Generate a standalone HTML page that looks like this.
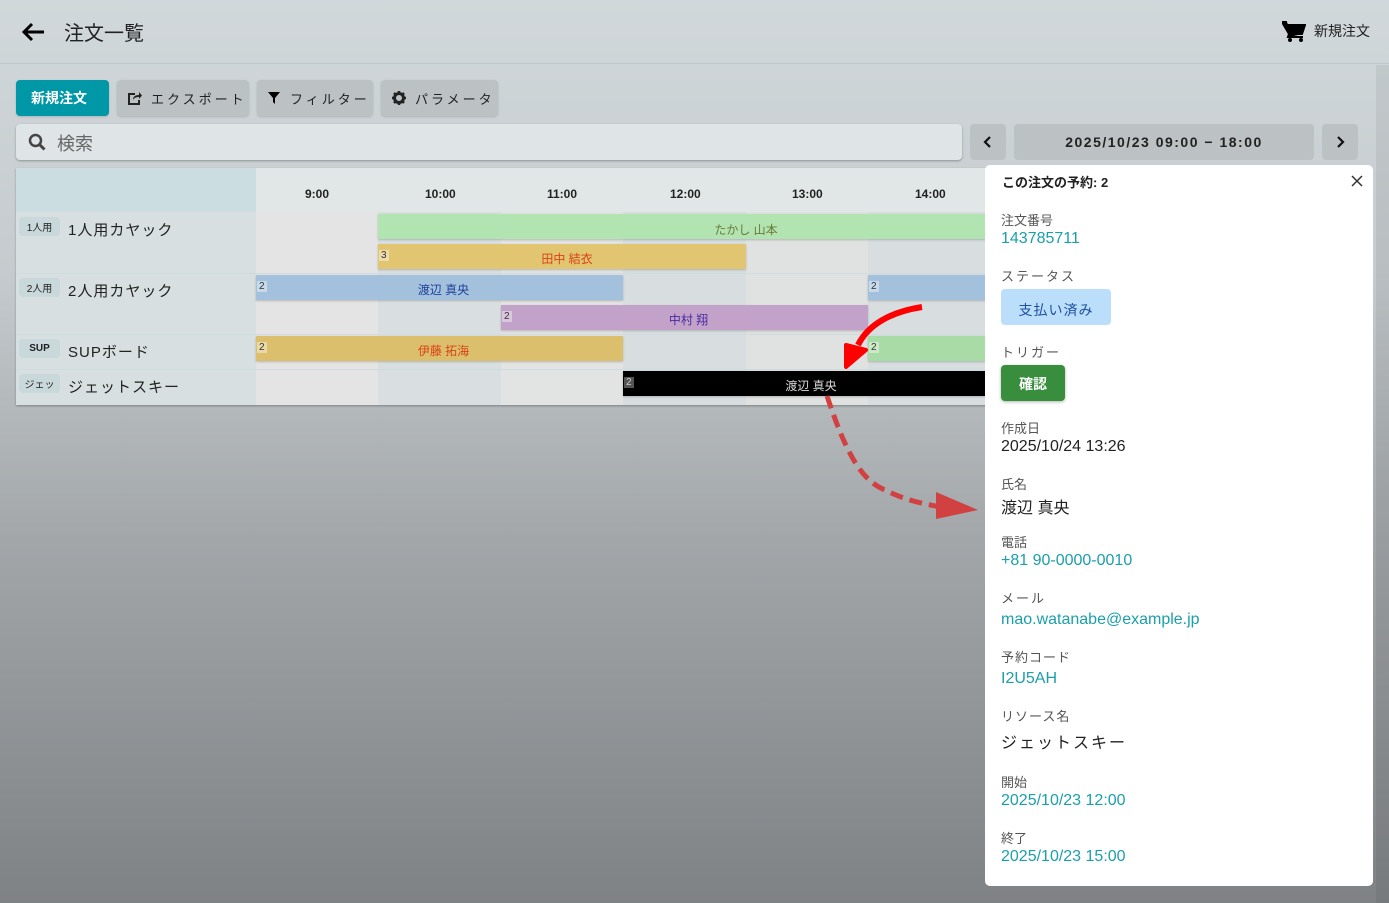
<!DOCTYPE html>
<html><head><meta charset="utf-8"><style>
*{box-sizing:border-box;margin:0;padding:0}
body{width:1389px;height:903px;overflow:hidden;position:relative;font-family:"Liberation Sans","Noto Sans CJK JP",sans-serif;background:linear-gradient(#d1d8db 0%,#c5cbce 30%,#a2a6a9 60%,#7f8285 100%);color:#222}
.a{position:absolute}
.btn{position:absolute;top:80px;height:36px;border-radius:4px;background:#bcc1c3;font-size:13px;letter-spacing:3px;display:flex;align-items:center;padding-left:11px;color:#222;box-shadow:0 1px 2px rgba(0,0,0,.15)}
.bar{position:absolute;height:25px;font-size:12px;display:flex;align-items:center;justify-content:center;box-shadow:0 1px 2px rgba(0,0,0,.2)}
.num{position:absolute;left:1px;top:6px;font-size:10px;background:rgba(255,255,255,.4);padding:0 2px;color:#333}
.lbl{position:absolute;left:1001px;font-size:13px;color:#555}
.val{position:absolute;left:1001px;font-size:16px;color:#1a9fab}
.tag{position:absolute;left:19px;width:41px;height:19px;background:#c9d8db;border-radius:4px;font-size:10px;display:flex;align-items:center;justify-content:center;color:#222}
.rn{position:absolute;left:68px;font-size:15px;letter-spacing:1px}
</style></head><body>
<div class="a" style="left:0;top:63px;width:1389px;height:1px;background:#c0c6c9"></div>
<svg class="a" style="left:20px;top:20px" width="26" height="24" viewBox="0 0 26 24"><path d="M24 12H5M12 4l-8 8 8 8" stroke="#000" stroke-width="3" fill="none"/></svg>
<div class="a" style="left:64px;top:17px;font-size:20px">注文一覧</div>
<svg class="a" style="left:1282px;top:21px" width="24" height="22" viewBox="0 0 24 22"><path d="M0 1h4l1 3h18l-3 9H7zM7 13l-1 3h15" stroke="#000" stroke-width="2" fill="#000"/><circle cx="8" cy="19" r="2"/><circle cx="19" cy="19" r="2"/></svg>
<div class="a" style="left:1314px;top:21px;font-size:14px">新規注文</div>
<div class="a" style="left:1376px;top:65px;width:13px;height:838px;background:rgba(0,0,0,.06)"></div>
<div class="btn" style="left:16px;width:93px;background:#0097a7;color:#fff;font-size:14px;letter-spacing:0;padding-left:15px;font-weight:bold">新規注文</div>
<div class="btn" style="left:117px;width:132px"><svg width="14" height="13" style="margin-right:9px" viewBox="0 0 14 13"><path d="M7 2H1v10h10V8" stroke="#222" stroke-width="2" fill="none"/><path d="M5 8c0-4 3-5 6-5V0l3 3.5L11 7V5C8 5 6 6 5 8z" fill="#222"/></svg>エクスポート</div>
<div class="btn" style="left:257px;width:116px"><svg width="12" height="12" style="margin-right:10px"><path d="M0 0h12L7 6v6L5 10V6z"/></svg>フィルター</div>
<div class="btn" style="left:381px;width:117px"><svg width="14" height="14" style="margin-right:9px" viewBox="0 0 14 14"><circle cx="7" cy="7" r="4.5" fill="none" stroke="#222" stroke-width="3"/><path d="M7 0v3M7 11v3M0 7h3M11 7h3M2 2l2 2M10 10l2 2M2 12l2-2M10 4l2-2" stroke="#222" stroke-width="2.5"/></svg>パラメータ</div>
<div class="a" style="left:16px;top:124px;width:946px;height:36px;background:#dfe4e6;border-radius:4px;box-shadow:0 1px 2px rgba(0,0,0,.3)"></div>
<svg class="a" style="left:28px;top:133px" width="18" height="18"><circle cx="7.5" cy="7.5" r="5.5" stroke="#444" stroke-width="2.5" fill="none"/><path d="M11.5 11.5l5 5" stroke="#444" stroke-width="3"/></svg>
<div class="a" style="left:57px;top:130px;font-size:18px;color:#666">検索</div>
<div class="a" style="left:970px;top:124px;width:36px;height:36px;background:#bcc1c3;border-radius:4px"><svg class="a" style="left:13px;top:12px" width="10" height="12"><path d="M7 1L2 6l5 5" stroke="#111" stroke-width="2.2" fill="none"/></svg></div>
<div class="a" style="left:1014px;top:124px;width:300px;height:36px;background:#bcc1c3;border-radius:4px;text-align:center;line-height:36px;font-size:14px;letter-spacing:1.5px;font-weight:bold;color:#222">2025/10/23 09:00 − 18:00</div>
<div class="a" style="left:1322px;top:124px;width:36px;height:36px;background:#bcc1c3;border-radius:4px"><svg class="a" style="left:13px;top:12px" width="10" height="12"><path d="M3 1l5 5-5 5" stroke="#111" stroke-width="2.2" fill="none"/></svg></div>
<!-- timeline -->
<div class="a" style="left:16px;top:168px;width:970px;height:237px;background:#dde2e3;box-shadow:0 1px 2px rgba(0,0,0,.3)"></div>
<div class="a" style="left:16px;top:168px;width:240px;height:44px;background:#cbdde0"></div>
<div class="a" style="left:16px;top:212px;width:240px;height:193px;background:#d8dfe0"></div>
<div class="a" style="left:256px;top:168px;width:730px;height:44px;background:#e1e6e6"></div>
<div class="a" style="left:256px;top:212px;width:122px;height:193px;background:#e4e4e4"></div>
<div class="a" style="left:378px;top:212px;width:123px;height:193px;background:#d9dfe1"></div>
<div class="a" style="left:501px;top:212px;width:122px;height:193px;background:#e2e3e3"></div>
<div class="a" style="left:623px;top:212px;width:123px;height:193px;background:#d8dee0"></div>
<div class="a" style="left:746px;top:212px;width:122px;height:193px;background:#e0e1e1"></div>
<div class="a" style="left:868px;top:212px;width:118px;height:193px;background:#d8dee0"></div>
<div class="a" style="left:16px;top:273px;width:970px;height:1px;background:#cfdcdd"></div>
<div class="a" style="left:16px;top:334px;width:970px;height:1px;background:#cfdcdd"></div>
<div class="a" style="left:16px;top:369px;width:970px;height:1px;background:#cfdcdd"></div>
<div class="a" style="left:256px;top:187px;width:730px;font-size:12px;font-weight:bold">
<span class="a" style="left:49px">9:00</span><span class="a" style="left:169px">10:00</span><span class="a" style="left:291px">11:00</span><span class="a" style="left:414px">12:00</span><span class="a" style="left:536px">13:00</span><span class="a" style="left:659px">14:00</span></div>
<div class="tag" style="top:217px">1人用</div><div class="rn" style="top:219px">1人用カヤック</div>
<div class="tag" style="top:278px">2人用</div><div class="rn" style="top:280px">2人用カヤック</div>
<div class="tag" style="top:339px;font-weight:bold">SUP</div><div class="rn" style="top:341px">SUPボード</div>
<div class="tag" style="top:374px">ジェッ</div><div class="rn" style="top:376px">ジェットスキー</div>
<div class="bar" style="left:378px;top:214px;width:736px;background:#b1e4b0;color:#6b7a3a;padding-top:5px">たかし 山本</div>
<div class="bar" style="left:378px;top:244px;width:368px;background:#e2c570;color:#d84315;padding-top:4px;padding-left:10px"><span class="num">3</span>田中 結衣</div>
<div class="bar" style="left:256px;top:275px;width:367px;background:#a3c1dd;color:#1e3f9a;padding-top:4px;padding-left:8px"><span class="num">2</span>渡辺 真央</div>
<div class="bar" style="left:868px;top:275px;width:200px;background:#a3c1dd"><span class="num">2</span></div>
<div class="bar" style="left:501px;top:305px;width:367px;background:#c2a2c8;color:#4a2ba0;padding-top:4px;padding-left:8px"><span class="num">2</span>中村 翔</div>
<div class="bar" style="left:256px;top:336px;width:367px;background:#dcbf6d;color:#d84315;padding-top:4px;padding-left:8px"><span class="num">2</span>伊藤 拓海</div>
<div class="bar" style="left:868px;top:336px;width:200px;background:#a8dba5"><span class="num">2</span></div>
<div class="bar" style="left:623px;top:371px;width:376px;background:#000;color:#ddd;padding-top:3px"><span class="num" style="background:#555;color:#ccc">2</span>渡辺 真央</div>
<svg class="a" style="left:0;top:0" width="1389" height="903">
<path d="M922 307C890 312 868 325 858 345" stroke="#f00" stroke-width="6" fill="none"/>
<path d="M846 367L846 345L866 350Z" fill="#f00" stroke="#f00" stroke-width="4" stroke-linejoin="round"/>
<path d="M827 396C845 450 860 480 885 490C905 500 920 503 940 507" stroke="#d24141" stroke-width="5" fill="none" stroke-dasharray="13 7"/>
<path d="M936 492L978 510L936 519Z" fill="#d24141"/>
</svg>
<!-- panel -->
<div class="a" style="left:985px;top:165px;width:388px;height:721px;background:#fff;border-radius:5px"></div>
<div class="a" style="left:1002px;top:172px;font-size:13px;font-weight:bold">この注文の予約: 2</div>
<svg class="a" style="left:1351px;top:175px" width="12" height="12"><path d="M1 1l10 10M11 1L1 11" stroke="#333" stroke-width="1.5"/></svg>
<div class="lbl" style="top:210px">注文番号</div><div class="val" style="top:230px">143785711</div>
<div class="lbl" style="top:266px;letter-spacing:2px">ステータス</div>
<div class="a" style="left:1001px;top:289px;width:110px;height:36px;background:#bbdefb;border-radius:4px;color:#1e4fa0;font-size:14px;letter-spacing:1px;line-height:42px;text-align:center">支払い済み</div>
<div class="lbl" style="top:342px;letter-spacing:2px">トリガー</div>
<div class="a" style="left:1001px;top:365px;width:64px;height:36px;background:#388e3c;border-radius:4px;color:#fff;font-size:14px;font-weight:bold;line-height:38px;text-align:center;box-shadow:0 1px 3px rgba(0,0,0,.3)">確認</div>
<div class="lbl" style="top:418px">作成日</div><div class="val" style="top:438px;color:#222">2025/10/24 13:26</div>
<div class="lbl" style="top:474px">氏名</div><div class="val" style="top:494px;color:#222">渡辺 真央</div>
<div class="lbl" style="top:532px">電話</div><div class="val" style="top:552px">+81 90-0000-0010</div>
<div class="lbl" style="top:588px;letter-spacing:2px">メール</div><div class="val" style="top:611px">mao.watanabe@example.jp</div>
<div class="lbl" style="top:647px;letter-spacing:1px">予約コード</div><div class="val" style="top:670px">I2U5AH</div>
<div class="lbl" style="top:706px;letter-spacing:1px">リソース名</div><div class="val" style="top:729px;color:#222;letter-spacing:2px">ジェットスキー</div>
<div class="lbl" style="top:772px">開始</div><div class="val" style="top:792px">2025/10/23 12:00</div>
<div class="lbl" style="top:828px">終了</div><div class="val" style="top:848px">2025/10/23 15:00</div>
</body></html>
